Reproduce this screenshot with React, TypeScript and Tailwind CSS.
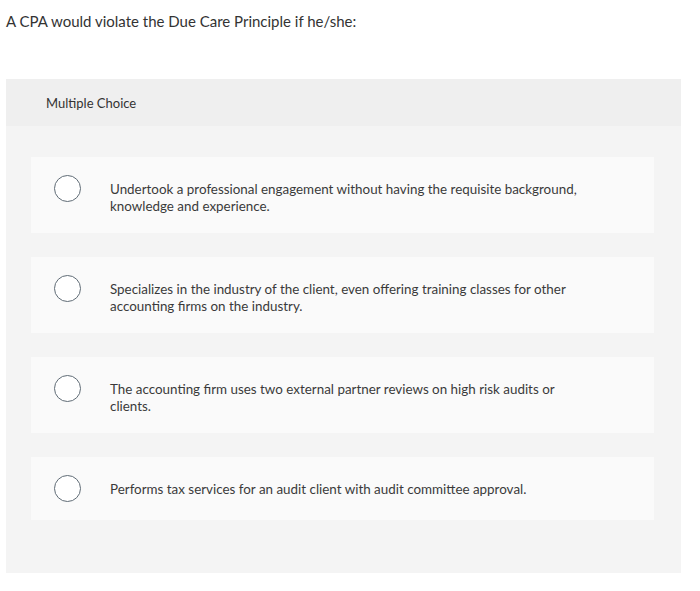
import React from "react";

const options = [
  "Undertook a professional engagement without having the requisite background, knowledge and experience.",
  "Specializes in the industry of the client, even offering training classes for other accounting firms on the industry.",
  "The accounting firm uses two external partner reviews on high risk audits or clients.",
  "Performs tax services for an audit client with audit committee approval.",
];

export default function App() {
  return (
    <div className="w-[700px] h-[591px] bg-white font-['Lato',sans-serif] text-[#333]">
      <div className="pt-[11px] pl-[6px] text-[15px] leading-[20px] text-[#333]">
        A CPA would violate the Due Care Principle if he/she:
      </div>
      <div className="ml-[6px] mt-[48px] w-[675px] h-[494px] bg-[#f4f4f4]">
        <div className="h-[47px] bg-[#efefef] pl-[40px] pt-[16px] text-[13px] leading-[17px] text-[#333]">
          Multiple Choice
        </div>
        <div className="flex flex-col gap-[24px] pt-[31px] pl-[25px]">
          {options.map((o, i) => (
            <div
              key={i}
              className={`flex items-start w-[623px] bg-[#fafafa] ${i === 3 ? "h-[63px]" : "h-[76px]"}`}
            >
              <div className="mt-[18px] ml-[23px] w-[27px] h-[27px] shrink-0 rounded-full border-[1.5px] border-[#5f6b75] bg-white" />
              <div className="mt-[24px] ml-[29px] w-[470px] text-[13.4px] leading-[17px] text-[#3a3a3a]">{o}</div>
            </div>
          ))}
        </div>
      </div>
    </div>
  );
}
